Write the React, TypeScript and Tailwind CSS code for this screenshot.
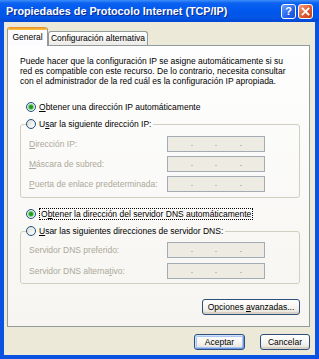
import React from 'react';

const ui = "font-['Liberation_Sans',Arial,sans-serif]";

function Radio({ checked }: { checked?: boolean }) {
  return (
    <span className="flex h-[10px] w-[10px] shrink-0 items-center justify-center rounded-full border border-[#1C5180] bg-[linear-gradient(135deg,#DCDCD7,#FFFFFF)]">
      {checked && (
        <span className="h-[4px] w-[4px] rounded-full bg-[#1E9A1E] shadow-[0_0_0_1px_#7FD27F]" />
      )}
    </span>
  );
}

function IpField() {
  return (
    <div className="flex h-[16px] w-[98px] shrink-0 items-start justify-evenly border border-[#A3ACB5] bg-[#EEECE2] pt-[8px]">
      {[0, 1, 2].map((i) => (
        <span key={i} className="h-[1px] w-[2px] bg-[#C4C0AE]" />
      ))}
    </div>
  );
}

function FieldRow({ children }: { children: React.ReactNode }) {
  return (
    <div className="flex h-[16px] items-center justify-between text-[#ACA899]">
      <span className="whitespace-nowrap">{children}</span>
      <IpField />
    </div>
  );
}

function XpButton({
  children,
  width,
  primary,
}: {
  children: React.ReactNode;
  width: string;
  primary?: boolean;
}) {
  return (
    <button
      type="button"
      className={`${width} h-[16px] rounded-[3px] border border-[#2D4F7A] bg-[linear-gradient(180deg,#FFFFFF_0%,#F5F4EF_55%,#E4E1D6_100%)] text-[8.5px] leading-none text-black ${
        primary
          ? 'shadow-[inset_1px_1px_0_#CEE2FF,inset_-1px_-1px_0_#7096E8,inset_0_0_0_2px_#A9C4F2]'
          : 'shadow-[inset_0_-2px_0_#D6D0C5]'
      }`}
    >
      {children}
    </button>
  );
}

export default function App() {
  return (
    <div className={`${ui} flex h-[359px] w-[319px] flex-col bg-[#0A52E2] text-[8.5px] text-black`}>
      {/* title bar */}
      <div className="flex h-[22px] shrink-0 items-center justify-between bg-[linear-gradient(180deg,#3D8EF9_0%,#0C62F0_14%,#0058EE_45%,#0355E6_80%,#0247D4_100%)] pl-[6px] pr-[6px]">
        <span className="whitespace-nowrap text-[10.8px] font-bold text-white [text-shadow:1px_1px_0_#0A2A8C]">
          Propiedades de Protocolo Internet (TCP/IP)
        </span>
        <div className="flex gap-[2px]">
          <div className="flex h-[15px] w-[15px] items-center justify-center rounded-[3px] border border-white bg-[linear-gradient(135deg,#6FA2FF,#2461EA_60%,#1A4FD8)] text-[11px] font-bold leading-none text-white">
            ?
          </div>
          <div className="flex h-[15px] w-[15px] items-center justify-center rounded-[3px] border border-white bg-[linear-gradient(135deg,#F29A79,#E0592E_55%,#C8401A)]">
            <svg width="9" height="9" viewBox="0 0 9 9">
              <path d="M1.5 1.5 L7.5 7.5 M7.5 1.5 L1.5 7.5" stroke="white" strokeWidth="1.8" strokeLinecap="square" />
            </svg>
          </div>
        </div>
      </div>

      {/* client area */}
      <div className="mx-[4px] mb-[4px] flex flex-1 flex-col bg-[#ECE9D8] pl-[3px] pr-[5px] pt-[5px]">
        {/* tabs */}
        <div className="flex h-[18px] items-end">
          <div className="relative z-10 -mb-[1px] flex h-[19px] w-[41px] flex-col overflow-hidden rounded-t-[3px] border-x border-[#919B9C] bg-[#FCFCFE]">
            <div className="h-[3px] shrink-0 bg-[linear-gradient(180deg,#E68B2C,#FFC83C)]" />
            <div className="flex flex-1 items-center justify-center pb-[1px]">General</div>
          </div>
          <div className="flex h-[14px] w-[100px] items-center justify-center whitespace-nowrap rounded-t-[3px] border-x border-t border-[#919B9C] bg-[linear-gradient(180deg,#FFFFFF,#ECEBE6)]">
            Configuración alternativa
          </div>
        </div>

        {/* tab page */}
        <div className="flex h-[282px] flex-col border border-[#919B9C] bg-[linear-gradient(180deg,#FEFEFE,#F6F5F1)]">
          <p className="ml-[12px] mt-[10px] whitespace-nowrap leading-[10px]">
            Puede hacer que la configuración IP se asigne automáticamente si su
            <br />
            red es compatible con este recurso. De lo contrario, necesita consultar
            <br />
            con el administrador de la red cuál es la configuración IP apropiada.
          </p>

          <label className="ml-[18px] mt-[15px] flex h-[12px] items-center gap-[3px]">
            <Radio checked />
            <span>
              <span className="underline">O</span>btener una dirección IP automáticamente
            </span>
          </label>

          <fieldset className="ml-[12px] mr-[9px] mt-[5px] rounded-[3px] border border-[#D0D0BF] px-[5px] pb-[5px]">
            <legend className="pr-[2px]">
              <label className="flex h-[12px] items-center gap-[3px]">
                <Radio />
                <span>
                  U<span className="underline">s</span>ar la siguiente dirección IP:
                </span>
              </label>
            </legend>
            <div className="flex flex-col gap-[4px] pl-[3px] pr-[29px] pt-[6px]">
              <FieldRow>
                <span className="underline">D</span>irección IP:
              </FieldRow>
              <FieldRow>
                <span className="underline">M</span>áscara de subred:
              </FieldRow>
              <FieldRow>
                <span className="underline">P</span>uerta de enlace predeterminada:
              </FieldRow>
            </div>
          </fieldset>

          <label className="ml-[18px] mt-[10px] flex h-[12px] items-center gap-[3px]">
            <Radio checked />
            <span className="border border-dotted border-black px-[1px] leading-[10px]">
              O<span className="underline">b</span>tener la dirección del servidor DNS automáticamente
            </span>
          </label>

          <fieldset className="ml-[12px] mr-[9px] mt-[5px] rounded-[3px] border border-[#D0D0BF] px-[5px] pb-[4px]">
            <legend className="pr-[2px]">
              <label className="flex h-[12px] items-center gap-[3px]">
                <Radio />
                <span>
                  <span className="underline">U</span>sar las siguientes direcciones de servidor DNS:
                </span>
              </label>
            </legend>
            <div className="flex flex-col gap-[5px] pl-[3px] pr-[29px] pt-[5px]">
              <FieldRow>Servidor DNS preferido:</FieldRow>
              <FieldRow>
                Servidor DNS alterna<span className="underline">t</span>ivo:
              </FieldRow>
            </div>
          </fieldset>

          <div className="mr-[9px] mt-[15px] flex justify-end">
            <XpButton width="w-[98px]">
              Opciones <span className="underline">a</span>vanzadas...
            </XpButton>
          </div>
        </div>

        {/* dialog buttons */}
        <div className="mt-[7px] flex justify-end gap-[15px]">
          <XpButton width="w-[51px]" primary>
            Aceptar
          </XpButton>
          <XpButton width="w-[50px]">Cancelar</XpButton>
        </div>
      </div>
    </div>
  );
}
